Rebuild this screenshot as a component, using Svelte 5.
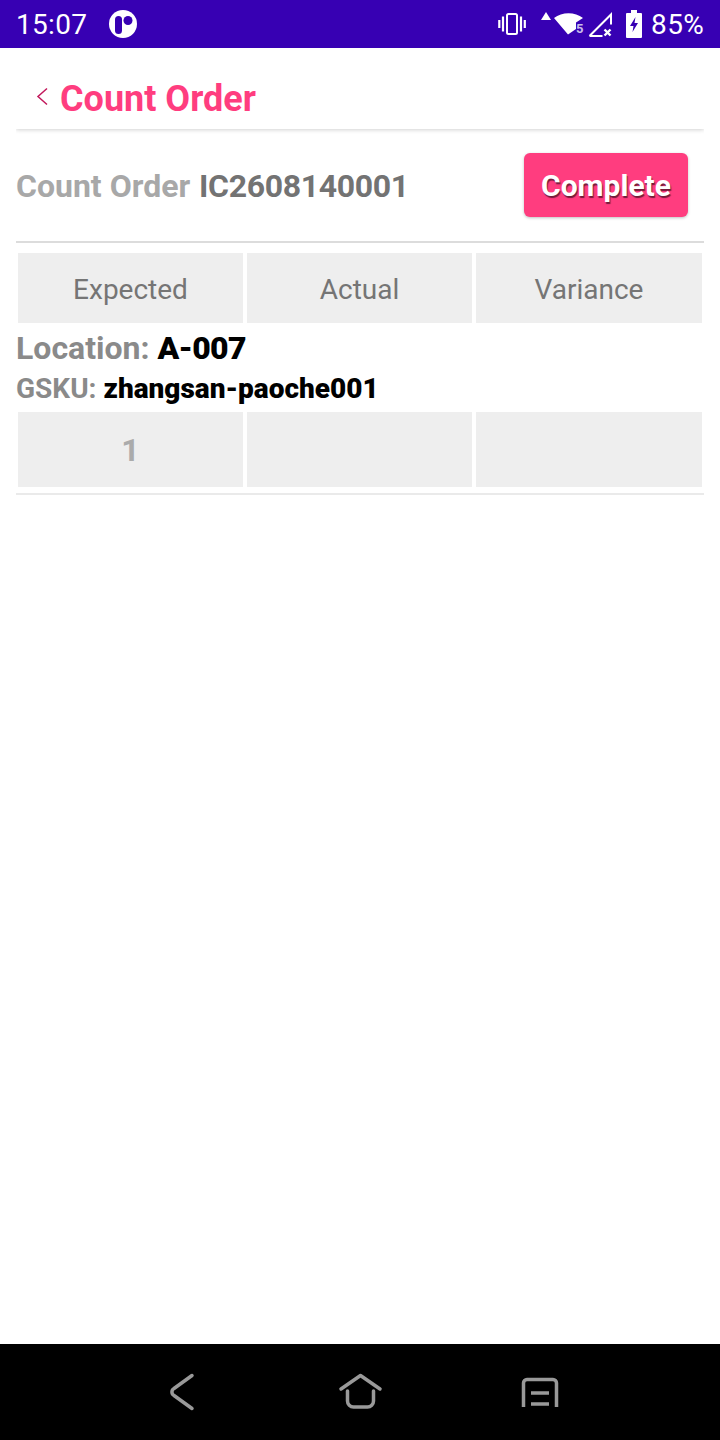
<script>
    const headers = ['Expected', 'Actual', 'Variance']
    const counts = ['1', '', '']
</script>

<div class="screen">
    <div class="status">
        <div class="left">
            <span class="time">15:07</span>
            <svg class="app-icon" width="28" height="28" viewBox="0 0 28 28">
                <circle cx="14" cy="14" r="14" fill="#fff" />
                <path d="M6 9.500a3.500 3.500 0 0 1 7 0v11a3.500 3.500 0 0 1-7 0z" fill="#3700b3" />
                <circle cx="19" cy="10.500" r="4.500" fill="#3700b3" />
            </svg>
        </div>
        <div class="right">
            <svg width="28" height="22" viewBox="0 0 28 22" fill="none" stroke="#fff">
                <rect x="9" y="1" width="10" height="20" rx="1.500" stroke-width="2" />
                <path d="M5 3.500v15M1.300 7v8M23 3.500v15M26.800 7v8" stroke-width="2.200" />
            </svg>
            <svg class="up" width="10" height="8" viewBox="0 0 10 8"><path d="M5 0l5 8H0z" fill="#fff" /></svg>
            <svg class="wifi" width="32" height="24" viewBox="0 0 32 24">
                <path d="M0 5C8-1.500 21-1.500 29 5L22 9.500V16L14 21.500z" fill="#fff" />
                <text x="22" y="19.500" class="five">5</text>
            </svg>
            <svg class="signal" width="26" height="26" viewBox="0 0 26 26" fill="none" stroke="#fff" stroke-width="2">
                <path d="M2.500 24L24 2.500v10M2.500 24h13" />
                <path d="M17.500 17.500l6 6M23.500 17.500l-6 6" stroke-width="2.400" />
            </svg>
            <svg class="battery" width="16" height="28" viewBox="0 0 16 28">
                <path d="M5 0h6v3h4a1 1 0 0 1 1 1v23a1 1 0 0 1-1 1H1a1 1 0 0 1-1-1V4a1 1 0 0 1 1-1h4z" fill="#fff" />
                <path d="M9.500 7L4 16h3.500l-1 6L12 13H8.500z" fill="#3700b3" />
            </svg>
            <span class="pct">85%</span>
        </div>
    </div>

    <main>
        <header class="title">
            <svg class="back" width="12" height="20" viewBox="0 0 12 20" fill="none">
                <path d="M11 1.500L2 9.500l9 8" stroke="#c2185b" stroke-width="1.500" />
            </svg>
            <h1>Count Order</h1>
        </header>

        <div class="order">
            <div class="order-no"><span class="light">Count Order</span> <span class="mid">IC2608140001</span></div>
            <button>Complete</button>
        </div>

        <div class="grid head">
            {#each headers as h}
                <div class="cell">{h}</div>
            {/each}
        </div>

        <div class="location"><span>Location:</span> <b>A-007</b></div>
        <div class="gsku"><span>GSKU:</span> <b>zhangsan-paoche001</b></div>

        <div class="grid counts">
            {#each counts as c}
                <div class="cell">{c}</div>
            {/each}
        </div>
    </main>

    <nav>
        <svg width="26" height="40" viewBox="0 0 26 40">
            <path d="M23 3.500L5 16.500a4 4 0 0 0 0 7L23 36.500" />
        </svg>
        <svg width="47" height="40" viewBox="0 0 47 40">
            <path d="M4 17L23.500 3.500L43 17M10.500 19v10a6 6 0 0 0 6 6h14a6 6 0 0 0 6-6V19" />
        </svg>
        <svg class="recents" width="40" height="40" viewBox="0 0 40 40">
            <path d="M3.500 35V11a3.500 3.500 0 0 1 3.500-3.500h26a3.500 3.500 0 0 1 3.500 3.500V35M11 21h18M11 32h18" />
        </svg>
    </nav>
</div>

<style>
    :global(body) {
        margin: 0;
    }
    .screen {
        width: 720px;
        height: 1440px;
        display: flex;
        flex-direction: column;
        background: #fff;
        font-family: Roboto, sans-serif;
    }

    .status {
        height: 48px;
        background: #3700b3;
        color: #fff;
        display: flex;
        align-items: center;
        justify-content: space-between;
        padding: 0 16px;
        flex: none;
        font-size: 28px;
        letter-spacing: .3px;
    }
    .left, .right {
        display: flex;
        align-items: center;
    }
    .app-icon {
        margin-left: 22px;
    }
    .up {
        margin: 0 0 16px 15px;
    }
    .wifi {
        margin-left: 3px;
        margin-top: 2px;
    }
    .five {
        font-size: 13px;
        font-weight: 700;
        fill: #c9bdea;
    }
    .signal {
        margin-left: 1px;
        margin-top: 1px;
    }
    .battery {
        margin-left: 13px;
    }
    .pct {
        margin-left: 9px;
    }

    main {
        flex: 1;
        padding: 0 16px;
    }
    .title {
        height: 81px;
        display: flex;
        align-items: center;
        box-sizing: border-box;
        padding: 20px 0 0 20px;
        box-shadow: 0 1px 4px rgba(0, 0, 0, .18);
        clip-path: inset(0 0 -10px 0);
    }
    .back {
        margin-bottom: 4px;
    }
    h1 {
        margin: 0 0 0 12px;
        font-size: 36px;
        font-weight: 700;
        color: #ff3d7f;
    }
    .order {
        height: 112px;
        margin-top: 2px;
        box-sizing: border-box;
        display: flex;
        align-items: center;
        justify-content: space-between;
        padding: 0 16px 0 0;
        border-bottom: 2px solid #dcdcdc;
        font-size: 32px;
        font-weight: 700;
    }
    .light {
        color: #a8a8a8;
    }
    .mid {
        color: #737373;
        margin-left: 1px;
        letter-spacing: -.35px;
    }
    button {
        width: 164px;
        height: 64px;
        margin-top: -2px;
        border: 0;
        border-radius: 6px;
        background: #ff3d7f;
        color: #fff;
        font: 700 30px Roboto, sans-serif;
        text-shadow: 1px 2px 1px rgba(0, 0, 0, .55);
        box-shadow: 0 1px 3px rgba(0, 0, 0, .25);
        padding: 0;
    }
    .grid {
        display: grid;
        grid-template-columns: 225px 225px 226px;
        gap: 4px;
        padding-left: 2px;
    }
    .cell {
        background: #eee;
        display: flex;
        align-items: center;
        justify-content: center;
        box-sizing: border-box;
    }
    .head {
        margin-top: 10px;
    }
    .head .cell {
        height: 70px;
        padding-top: 2px;
        font-size: 28px;
        color: #757575;
    }
    .location {
        margin-top: 6px;
        height: 38px;
        line-height: 38px;
        font-size: 32px;
        font-weight: 700;
        white-space: nowrap;
    }
    .location b {
        letter-spacing: -.7px;
    }
    .location span, .gsku span {
        color: #8a8a8a;
    }
    .location b, .gsku b {
        color: #000;
    }
    .gsku {
        margin-top: 4px;
        height: 36px;
        line-height: 36px;
        font-size: 28px;
        font-weight: 700;
        white-space: nowrap;
    }
    .counts {
        margin-top: 5px;
        padding-bottom: 6px;
        border-bottom: 2px solid #eaeaea;
    }
    .counts .cell {
        height: 75px;
        font-size: 32px;
        font-weight: 700;
        color: #ababab;
    }

    nav {
        height: 96px;
        background: #000;
        flex: none;
        display: flex;
        align-items: center;
        padding-left: 169px;
    }
    nav svg {
        stroke: #999;
        stroke-width: 3.500;
        stroke-linecap: round;
        stroke-linejoin: round;
        fill: none;
    }
    nav svg:nth-child(1) {
        margin-right: 142px;
    }
    nav svg:nth-child(3) {
        margin-left: 136px;
    }
    nav .recents {
        stroke-linecap: butt;
    }
</style>
